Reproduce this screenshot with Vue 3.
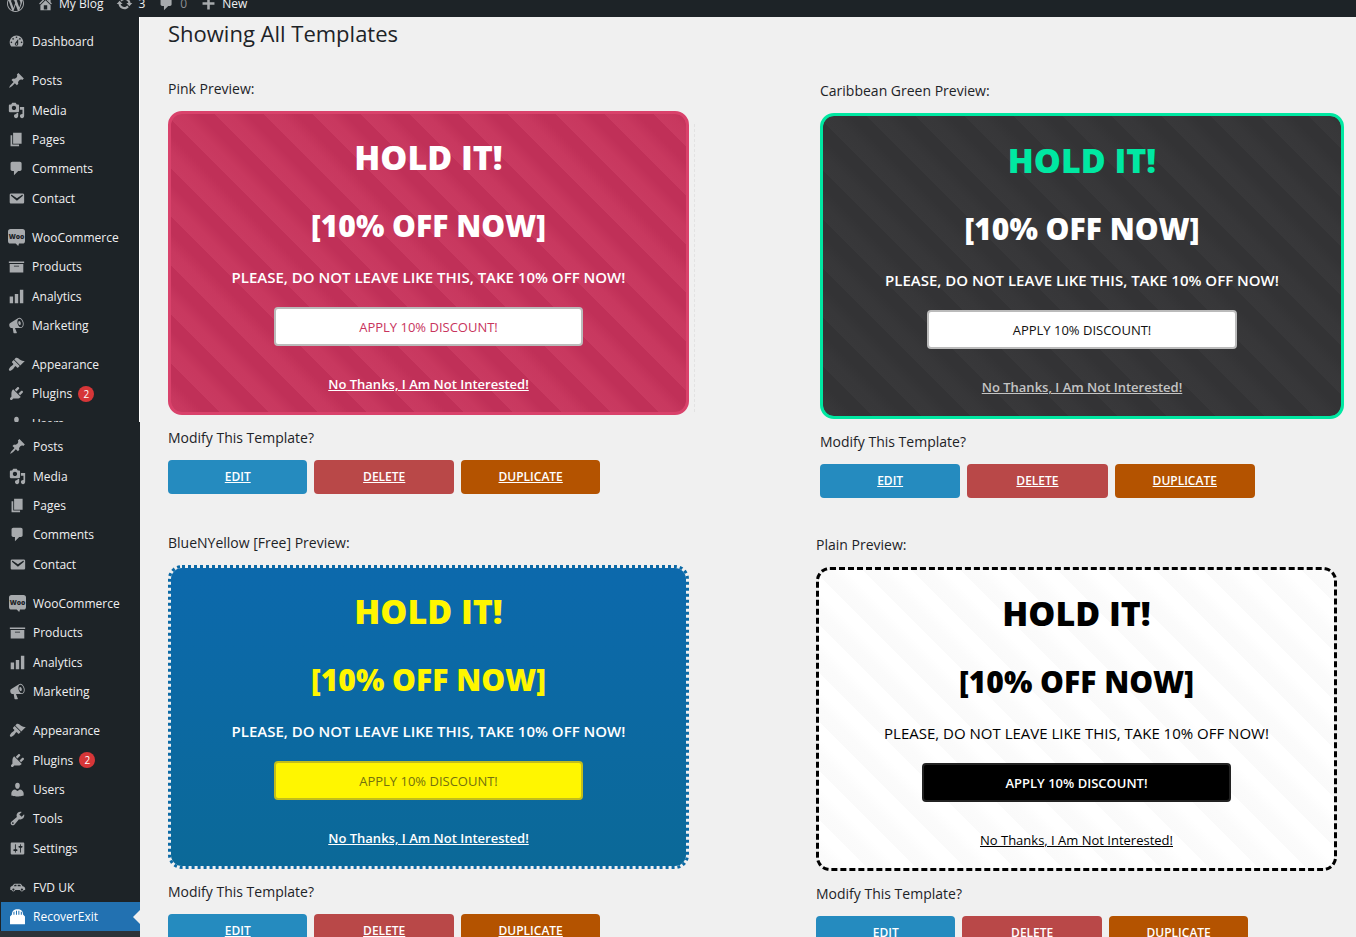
<script setup>
const icons = {
  dashboard: 'M3.76 16h12.48c1.1-1.37 1.76-3.11 1.76-5 0-4.42-3.58-8-8-8s-8 3.58-8 8c0 1.89.66 3.63 1.76 5zM10 4c.55 0 1 .45 1 1s-.45 1-1 1-1-.45-1-1 .45-1 1-1zM6 6c.55 0 1 .45 1 1s-.45 1-1 1-1-.45-1-1 .45-1 1-1zm8 0c.55 0 1 .45 1 1s-.45 1-1 1-1-.45-1-1 .45-1 1-1zm-5.37 5.55L12 7v6c0 1.1-.9 2-2 2s-2-.9-2-2c0-.57.24-1.08.63-1.45zM4 10c.55 0 1 .45 1 1s-.45 1-1 1-1-.45-1-1 .45-1 1-1zm12 0c.55 0 1 .45 1 1s-.45 1-1 1-1-.45-1-1 .45-1 1-1zm-5 3c0-.55-.45-1-1-1s-1 .45-1 1 .45 1 1 1 1-.45 1-1z',
  post: 'M10.44 3.02l1.82-1.82 6.36 6.35-1.83 1.82c-1.05-.68-2.48-.57-3.41.36l-.75.75c-.92.93-1.04 2.35-.35 3.41l-1.83 1.82-2.41-2.41-2.8 2.79c-.42.42-3.38 2.71-3.8 2.29s1.86-3.39 2.28-3.81l2.79-2.79L4.1 9.36l1.83-1.82c1.05.69 2.48.57 3.4-.36l.75-.75c.93-.92 1.05-2.35.36-3.41z',
  media: 'M13 11V4c0-.55-.45-1-1-1h-1.67L9 1H5L3.67 3H2c-.55 0-1 .45-1 1v7c0 .55.45 1 1 1h10c.55 0 1-.45 1-1zM7 4.5c1.38 0 2.5 1.12 2.5 2.5S8.38 9.5 7 9.5 4.5 8.38 4.5 7 5.62 4.5 7 4.5zM14 6h5v10.5c0 1.38-1.12 2.5-2.5 2.5S14 17.88 14 16.5s1.12-2.5 2.5-2.5c.17 0 .34.02.5.05V9h-3V6zm-4 8.05V13h2v3.5c0 1.38-1.12 2.5-2.5 2.5S7 17.88 7 16.5 8.12 14 9.5 14c.17 0 .34.02.5.05z',
  page: 'M6 15V2h10v13H6zm-1 1h8v2H3V5h2v11z',
  comment: 'M5 2h9c1.1 0 2 .9 2 2v7c0 1.1-.9 2-2 2h-2l-5 5v-5H5c-1.1 0-2-.9-2-2V4c0-1.1.9-2 2-2z',
  email: 'M3.87 4h13.25C18.37 4 19 4.59 19 5.79v8.42c0 1.19-.63 1.79-1.88 1.79H3.87c-1.25 0-1.88-.6-1.88-1.79V5.79c0-1.2.63-1.79 1.88-1.79zm6.62 8.6l6.74-5.53c.24-.2.43-.66.13-1.07-.29-.41-.82-.42-1.17-.17l-5.7 3.86L4.8 5.83c-.35-.25-.88-.24-1.17.17-.3.41-.11.87.13 1.07z',
  woo: 'M3 0h14a3 3 0 0 1 3 3v11a3 3 0 0 1-3 3h-4l-1 3-3-3H3a3 3 0 0 1-3-3V3a3 3 0 0 1 3-3z',
  archive: 'M19 4v2H1V4h18zM2 7h16v10H2V7zm11 3V9H7v1h6z',
  chart: 'M18 18V2h-4v16h4zm-6 0V7H8v11h4zm-6 0v-8H2v8h4z',
  megaphone: 'M18.15 5.94c.46 1.62.38 3.22-.02 4.48-.42 1.28-1.26 2.18-2.3 2.48-.16.06-.26.06-.4.06-.06.02-.12.02-.18.02-.06.02-.14.02-.22.02h-6.8l2.22 5.5c.02.14-.06.26-.14.34-.08.1-.24.16-.34.16H6.95c-.1 0-.26-.06-.34-.16-.08-.08-.16-.2-.14-.34l-1-5.5H4.25l-.02-.02c-.5.06-1.08-.18-1.54-.62s-.88-1.08-1.06-1.88c-.24-.8-.2-1.56-.02-2.2.18-.62.58-1.08 1.06-1.3l.02-.02 9-5.4c.1-.06.18-.1.24-.16.06-.04.14-.08.24-.12.16-.08.28-.12.5-.18 1.04-.3 2.24.1 3.22.98s1.84 2.24 2.26 3.86zm-2.58 5.98h-.02c.4-.1.74-.34 1.04-.7.58-.7.86-1.76.86-3.04 0-.64-.1-1.3-.28-1.98-.34-1.36-1.02-2.5-1.78-3.24s-1.68-1.1-2.46-.88c-.82.22-1.4.96-1.7 2-.32 1.04-.28 2.36.06 3.72.38 1.36 1 2.5 1.8 3.24.78.74 1.62 1.1 2.48.88zm-2.54-7.08c.22-.04.42-.02.62.04.38.16.76.48 1.02 1s.42 1.2.42 1.78c0 .3-.04.56-.12.8-.18.48-.44.84-.86.94-.34.1-.8-.06-1.14-.4s-.64-.86-.78-1.5c-.18-.62-.12-1.24.02-1.72s.48-.84.82-.94z',
  appearance: 'M14.48 11.06L7.41 3.99l1.5-1.5c.5-.56 2.3-.47 3.51.32 1.21.8 1.43 1.28 2.91 2.1 1.18.64 2.45 1.26 4.45.85zm-.71.71L6.7 4.7 4.93 6.47c-.39.39-.39 1.02 0 1.41l1.06 1.06c.39.39.39 1.03 0 1.42-.6.6-1.43 1.11-2.21 1.69-.35.26-.7.53-1.01.84C1.43 14.23.4 16.08 1.4 17.07c.99 1 2.84-.03 4.18-1.36.31-.31.58-.66.85-1.02.57-.78 1.08-1.61 1.69-2.21.39-.39 1.02-.39 1.41 0l1.06 1.06c.39.39 1.02.39 1.41 0z',
  plugins: 'M13.11 4.36L9.87 7.6 8 5.73l3.24-3.24c.35-.34 1.05-.2 1.56.32.52.51.66 1.21.31 1.55zm-8 1.77l.91-1.12 9.01 9.01-1.19.84c-.71.71-2.63 1.16-3.82 1.16H6.14L4.9 17.26c-.59.59-1.54.59-2.12 0-.59-.58-.59-1.53 0-2.12l1.24-1.24v-3.88c0-1.13.4-3.19 1.09-3.89zm7.26 3.97l3.24-3.24c.34-.35 1.04-.21 1.55.31.52.51.66 1.21.31 1.55l-3.24 3.25z',
  users: 'M10 9.25c-2.27 0-2.73-3.44-2.73-3.44C7 4.02 7.82 2 9.97 2c2.16 0 2.98 2.02 2.71 3.81 0 0-.41 3.44-2.68 3.44zm0 2.57L12.72 10c2.39 0 4.52 2.33 4.52 4.53v2.49s-3.65 1.13-7.24 1.13c-3.65 0-7.24-1.13-7.24-1.13v-2.49c0-2.25 1.94-4.48 4.47-4.48z',
  tools: 'M16.68 9.77c-1.34 1.34-3.3 1.67-4.95.99l-5.41 6.52c-.99.99-2.59.99-3.58 0s-.99-2.59 0-3.57l6.52-5.42c-.68-1.65-.35-3.61.99-4.95 1.28-1.28 3.12-1.62 4.72-1.06l-2.89 2.89 2.82 2.82 2.86-2.87c.53 1.58.18 3.39-1.08 4.65zM3.81 16.21c.4.39 1.04.39 1.43 0 .4-.4.4-1.04 0-1.43-.39-.4-1.03-.4-1.43 0-.39.39-.39 1.03 0 1.43z',
  settings: 'M18 16V4c0-.55-.45-1-1-1H3c-.55 0-1 .45-1 1v12c0 .55.45 1 1 1h14c.55 0 1-.45 1-1zM8 11h1c.55 0 1 .45 1 1s-.45 1-1 1H8v1.5c0 .28-.22.5-.5.5s-.5-.22-.5-.5V13H6c-.55 0-1-.45-1-1s.45-1 1-1h1V5.5c0-.28.22-.5.5-.5s.5.22.5.5V11zm5-2h-1c-.55 0-1-.45-1-1s.45-1 1-1h1V5.5c0-.28.22-.5.5-.5s.5.22.5.5V7h1c.55 0 1 .45 1 1s-.45 1-1 1h-1v5.5c0 .28-.22.5-.5.5s-.5-.22-.5-.5V9z',
  car: 'M6.500 5.500h7c1 .6 1.700 1.700 2.400 2.900 1.900.3 3 1.200 3.100 2.600v2h-1.600a2.300 2.300 0 0 1-4.400 0H7.400a2.300 2.300 0 0 1-4.400 0H1.500v-2.300c0-1.300.8-2.200 2.400-2.400.6-1.200 1.500-2.200 2.600-2.800zM6.800 6.900L5.600 8.500h3.200V6.900zm3.400 0v1.600h3.900c-.4-.7-.9-1.300-1.400-1.600zM5.200 11.100a1.300 1.300 0 1 0 0 2.600 1.300 1.300 0 0 0 0-2.600zm10 0a1.300 1.300 0 1 0 0 2.600 1.300 1.300 0 0 0 0-2.600z',
  bag: 'M3.500 7.500C3.500 3.500 6 1.500 10 1.500s6.500 2 6.500 6L18.800 10v9H1.200v-9zM5.200 4.800v3h1.200v-3.800zM8.200 3.300v4.500h1.200V3.300zM11 3.300v4.500h1.200V3.300zM13.900 4v3.800h1.200v-3z',
  home: 'M16 8.5l1.53 1.53-1.06 1.06L10 4.6l-6.47 6.49-1.06-1.06L10 2.5l4 4v-2h2v4zm-6-2.46l6 5.99V18H4v-5.97zM12 17v-5H8v5h4z',
  update: 'M10.2 3.28c3.53 0 6.43 2.61 6.92 6h2.08l-3.5 4-3.5-4h2.32c-.45-1.97-2.21-3.45-4.32-3.45-1.45 0-2.73.71-3.54 1.78L4.95 5.66C6.23 4.2 8.11 3.28 10.2 3.28zm-.4 13.44c-3.52 0-6.43-2.61-6.92-6H.8l3.5-4c1.17 1.33 2.33 2.67 3.5 4H5.48c.45 1.97 2.21 3.45 4.32 3.45 1.45 0 2.73-.71 3.54-1.78l1.71 1.95c-1.28 1.46-3.15 2.38-5.25 2.38z',
  plus: 'M17 8.500v3h-5.500V17h-3v-5.500H3v-3h5.500V3h3v5.500z',
  wordpress: 'M20 10c0-5.51-4.49-10-10-10C4.48 0 0 4.49 0 10c0 5.52 4.48 10 10 10 5.51 0 10-4.48 10-10zM7.78 15.37L4.37 6.22c.55-.02 1.17-.08 1.17-.08.5-.06.44-1.13-.06-1.11 0 0-1.45.11-2.37.11-.18 0-.37 0-.58-.01C4.12 2.69 6.87 1.11 10 1.11c2.33 0 4.45.87 6.05 2.34-.68-.11-1.65.39-1.65 1.58 0 .74.45 1.36.9 2.1.35.61.55 1.36.55 2.46 0 1.49-1.4 5-1.4 5l-3.03-8.37c.54-.02.82-.17.82-.17.5-.05.44-1.25-.06-1.22 0 0-1.44.12-2.38.12-.87 0-2.33-.12-2.33-.12-.5-.03-.56 1.2-.06 1.22l.92.08 1.26 3.41zM17.41 10c.24-.64.74-1.87.43-4.25.7 1.29 1.05 2.71 1.05 4.25 0 3.29-1.73 6.24-4.4 7.78.97-2.59 1.94-5.2 2.92-7.78zM6.1 18.09C3.12 16.65 1.11 13.53 1.11 10c0-1.3.23-2.48.72-3.59C3.25 10.3 4.67 14.2 6.1 18.09zm4.03-6.63l2.58 6.98c-.86.29-1.76.45-2.71.45-.79 0-1.57-.11-2.29-.33.81-2.38 1.62-4.74 2.42-7.1z',
}

const dashboard = [{ icon: 'dashboard', label: 'Dashboard' }]
const content = [
  { icon: 'post', label: 'Posts' },
  { icon: 'media', label: 'Media' },
  { icon: 'page', label: 'Pages' },
  { icon: 'comment', label: 'Comments' },
  { icon: 'email', label: 'Contact' },
]
const shop = [
  { icon: 'woo', label: 'WooCommerce' },
  { icon: 'archive', label: 'Products' },
  { icon: 'chart', label: 'Analytics' },
  { icon: 'megaphone', label: 'Marketing' },
]
const admin = [
  { icon: 'appearance', label: 'Appearance' },
  { icon: 'plugins', label: 'Plugins', count: 2 },
  { icon: 'users', label: 'Users' },
  { icon: 'tools', label: 'Tools' },
  { icon: 'settings', label: 'Settings' },
]
const extra = [
  { icon: 'car', label: 'FVD UK' },
  { icon: 'bag', label: 'RecoverExit', active: true },
]
const menus = [
  { name: 'upper', groups: [dashboard, content, shop, admin.slice(0, 3)] },
  { name: 'lower', groups: [content, shop, admin, extra] },
]

const rows = [
  [
    { theme: 'pink', title: 'Pink Preview:' },
    { theme: 'green', title: 'Caribbean Green Preview:' },
  ],
  [
    { theme: 'blue', title: 'BlueNYellow [Free] Preview:' },
    { theme: 'plain', title: 'Plain Preview:' },
  ],
]
</script>

<template>
  <div class="page">
    <header class="bar">
      <nav class="bar-items">
        <a href="#" class="bar-item" aria-label="About WordPress">
          <svg class="icon" viewBox="0 0 20 20"><path :d="icons.wordpress" /></svg>
        </a>
        <a href="#" class="bar-item"><svg class="icon" viewBox="0 0 20 20"><path :d="icons.home" /></svg>My Blog</a>
        <a href="#" class="bar-item"><svg class="icon" viewBox="0 0 20 20"><path :d="icons.update" /></svg>3</a>
        <a href="#" class="bar-item muted"><svg class="icon" viewBox="0 0 20 20"><path :d="icons.comment" /></svg>0</a>
        <a href="#" class="bar-item"><svg class="icon" viewBox="0 0 20 20"><path :d="icons.plus" /></svg>New</a>
      </nav>
    </header>

    <div class="body">
      <aside class="sidebar">
        <nav v-for="menu in menus" :key="menu.name" class="menu" :class="menu.name">
          <ul v-for="(group, g) in menu.groups" :key="g" class="group" :class="'n' + group.length">
            <li v-for="item in group" :key="item.label" class="entry">
              <a href="#" class="link" :class="{ active: item.active }">
                <svg class="icon" viewBox="0 0 20 20">
                  <path :d="icons[item.icon]" fill-rule="evenodd" />
                  <text v-if="item.icon === 'woo'" class="woo" x="10" y="12" text-anchor="middle">Woo</text>
                </svg>
                <span>{{ item.label }}</span>
                <span v-if="item.count" class="count">{{ item.count }}</span>
              </a>
            </li>
          </ul>
        </nav>
      </aside>

      <main class="main">
        <h1 class="title">Showing All Templates</h1>
        <div v-for="(row, r) in rows" :key="r" class="row" :class="'row' + r">
          <section v-for="card in row" :key="card.theme" class="template" :class="card.theme">
            <h2 class="label">{{ card.title }}</h2>
            <div class="card">
              <p class="hold">HOLD IT!</p>
              <p class="offer">[10% OFF NOW]</p>
              <p class="please">PLEASE, DO NOT LEAVE LIKE THIS, TAKE 10% OFF NOW!</p>
              <button type="button" class="apply">APPLY 10% DISCOUNT!</button>
              <a href="#" class="decline">No Thanks, I Am Not Interested!</a>
            </div>
            <p class="label modify">Modify This Template?</p>
            <div class="actions">
              <a href="#" class="action edit">EDIT</a>
              <a href="#" class="action delete">DELETE</a>
              <a href="#" class="action duplicate">DUPLICATE</a>
            </div>
          </section>
        </div>
      </main>
    </div>
  </div>
</template>

<style>
html,
body {
  margin: 0;
  height: 100%;
  overflow: hidden;
  background: #f0f0f0;
}
#app {
  height: 100%;
}
</style>

<style scoped>
.page {
  height: 100%;
  display: flex;
  flex-direction: column;
  overflow: hidden;
  font-family: "Open Sans", "Noto Sans", sans-serif;
  color: #1d2327;
}
.page * {
  box-sizing: border-box;
}
.icon {
  width: 17px;
  height: 17px;
  flex: none;
  fill: #a7aaad;
}
.bar {
  flex: none;
  height: 17px;
  overflow: hidden;
  background: #1d2327;
}
.bar-items {
  display: flex;
  height: 28px;
  margin-top: -11px;
  padding-left: 7px;
  gap: 13px;
}
.bar-item {
  display: flex;
  align-items: center;
  gap: 5px;
  font-size: 12px;
  font-weight: 500;
  color: #f0f0f1;
  text-decoration: none;
}
.bar-item.muted {
  color: #8c8f94;
}
.body {
  flex: 1;
  min-height: 0;
  display: flex;
}
.sidebar {
  flex: none;
  width: 140px;
  background: #1d2327;
}
.menu {
  overflow: hidden;
  display: flex;
  flex-direction: column;
  gap: 10px;
}
.upper {
  height: 405px;
  padding-top: 10px;
  border-right: 1px solid #fff;
}
.lower {
  padding: 10px 0 0 1px;
  height: 515px;
  background: linear-gradient(#1d2327 509px, #2c3338 509px);
}
.group {
  flex: none;
  list-style: none;
  margin: 0;
  padding: 0;
  display: grid;
  grid-auto-rows: 1fr;
}
.n1 { height: 29px; }
.n2 { height: 58px; }
.n3 { height: 88px; }
.n4 { height: 117px; }
.n5 { height: 147px; }
.link {
  position: relative;
  height: 100%;
  display: flex;
  align-items: center;
  gap: 7px;
  padding-left: 8px;
  font-size: 12px;
  font-weight: 500;
  color: #f0f0f1;
  text-decoration: none;
}
.woo {
  font-size: 8px;
  font-weight: 800;
  fill: #1d2327;
}
.count {
  margin-left: -1px;
  width: 16px;
  height: 16px;
  border-radius: 8px;
  background: #d63638;
  color: #fff;
  font-size: 10px;
  line-height: 16px;
  text-align: center;
}
.active {
  background: #2271b1;
  color: #fff;
}
.active .icon {
  fill: #fff;
}
.active::after {
  content: "";
  position: absolute;
  right: 0;
  top: 50%;
  margin-top: -7px;
  border: 7px solid transparent;
  border-left-width: 0;
  border-right-color: #f0f0f0;
}
.main {
  flex: 1;
  min-width: 0;
  padding-left: 28px;
}
.title {
  margin: 0 0 30px;
  font-size: 22px;
  font-weight: 500;
  line-height: 32px;
}
.row {
  display: grid;
}
.row0 {
  grid-template-columns: 521fr 131fr 524fr 12fr;
}
.row1 {
  grid-template-columns: 521fr 127fr 521fr 19fr;
  margin-top: 35px;
}
.template {
  grid-column: 1;
  grid-row: 1;
}
.template:last-child {
  grid-column: 3;
  padding-top: 2px;
}
.label {
  margin: 0;
  font-size: 14px;
  font-weight: 500;
  line-height: 20px;
  height: 20px;
}
.card {
  position: relative;
  margin-top: 12px;
  border: 3px solid;
  border-radius: 14px;
  height: 304px;
  padding-top: 20px;
  display: flex;
  flex-direction: column;
  align-items: center;
  text-align: center;
}
.hold,
.offer,
.please {
  margin: 0;
}
.hold {
  font-size: 34px;
  font-weight: 800;
  line-height: 46px;
}
.offer {
  margin-top: 23px;
  font-size: 30px;
  font-weight: 800;
  line-height: 46px;
}
.please {
  margin-top: 18px;
  font-size: 15px;
  font-weight: 600;
  line-height: 20px;
}
.apply {
  margin-top: 20px;
  width: 60%;
  height: 39px;
  border: 2px solid #bbb;
  border-radius: 4px;
  background: #fff;
  font-family: inherit;
  font-size: 13px;
  font-weight: 500;
}
.decline {
  margin-top: 28px;
  font-size: 13px;
  font-weight: 600;
  line-height: 20px;
  color: inherit;
}
.modify {
  margin-top: 13px;
}
.actions {
  display: grid;
  grid-template-columns: repeat(3, 1fr);
  width: 83%;
  gap: 7px;
  margin-top: 12px;
}
.action {
  height: 34px;
  border-radius: 4px;
  font-size: 12px;
  font-weight: 600;
  line-height: 34px;
  text-align: center;
  color: #fff;
}
.edit { background: #258bbf; }
.delete { background: #b94848; }
.duplicate { background: #b45300; }

.pink .card {
  color: #fff;
  border-color: #d9426b;
  background: repeating-linear-gradient(45deg, #c93a61 0%, #c8385f 2%, #c03058 4%, #c03058 6%) padding-box, #d9426b;
}
.pink .card::after {
  content: "";
  position: absolute;
  top: 10px;
  bottom: 0;
  right: -9px;
  border-right: 1px dashed #e2e2e2;
}
.pink .apply {
  color: #c8345d;
}
.green .card {
  height: 306px;
  padding-top: 21px;
  color: #fff;
  border-color: #00e8a2;
  background: repeating-linear-gradient(45deg, #38383a 0%, #373739 2%, #333335 4%, #333335 6%) padding-box, #00e8a2;
}
.green .hold {
  color: #00e8a2;
}
.green .apply {
  color: #111;
}
.green .decline {
  color: #c4c4c4;
}
.blue .card {
  color: #fff;
  border: 3px dotted #0b69a5;
  background: linear-gradient(#0c69ac, #0b6998) padding-box;
}
.blue .hold,
.blue .offer {
  color: #fff600;
}
.blue .apply {
  background: #fff600;
  border-color: #c2bd1c;
  color: #73700f;
}
.plain .card {
  color: #000;
  border: 3px dashed #000;
  background: repeating-linear-gradient(45deg, #fafafa 0%, #fbfbfb 2%, #fff 4%, #fff 6%) padding-box;
}
.plain .please,
.plain .decline {
  font-weight: 500;
}
.plain .apply {
  background: #000;
  border-color: #222;
  color: #fff;
  font-weight: 600;
}
</style>
